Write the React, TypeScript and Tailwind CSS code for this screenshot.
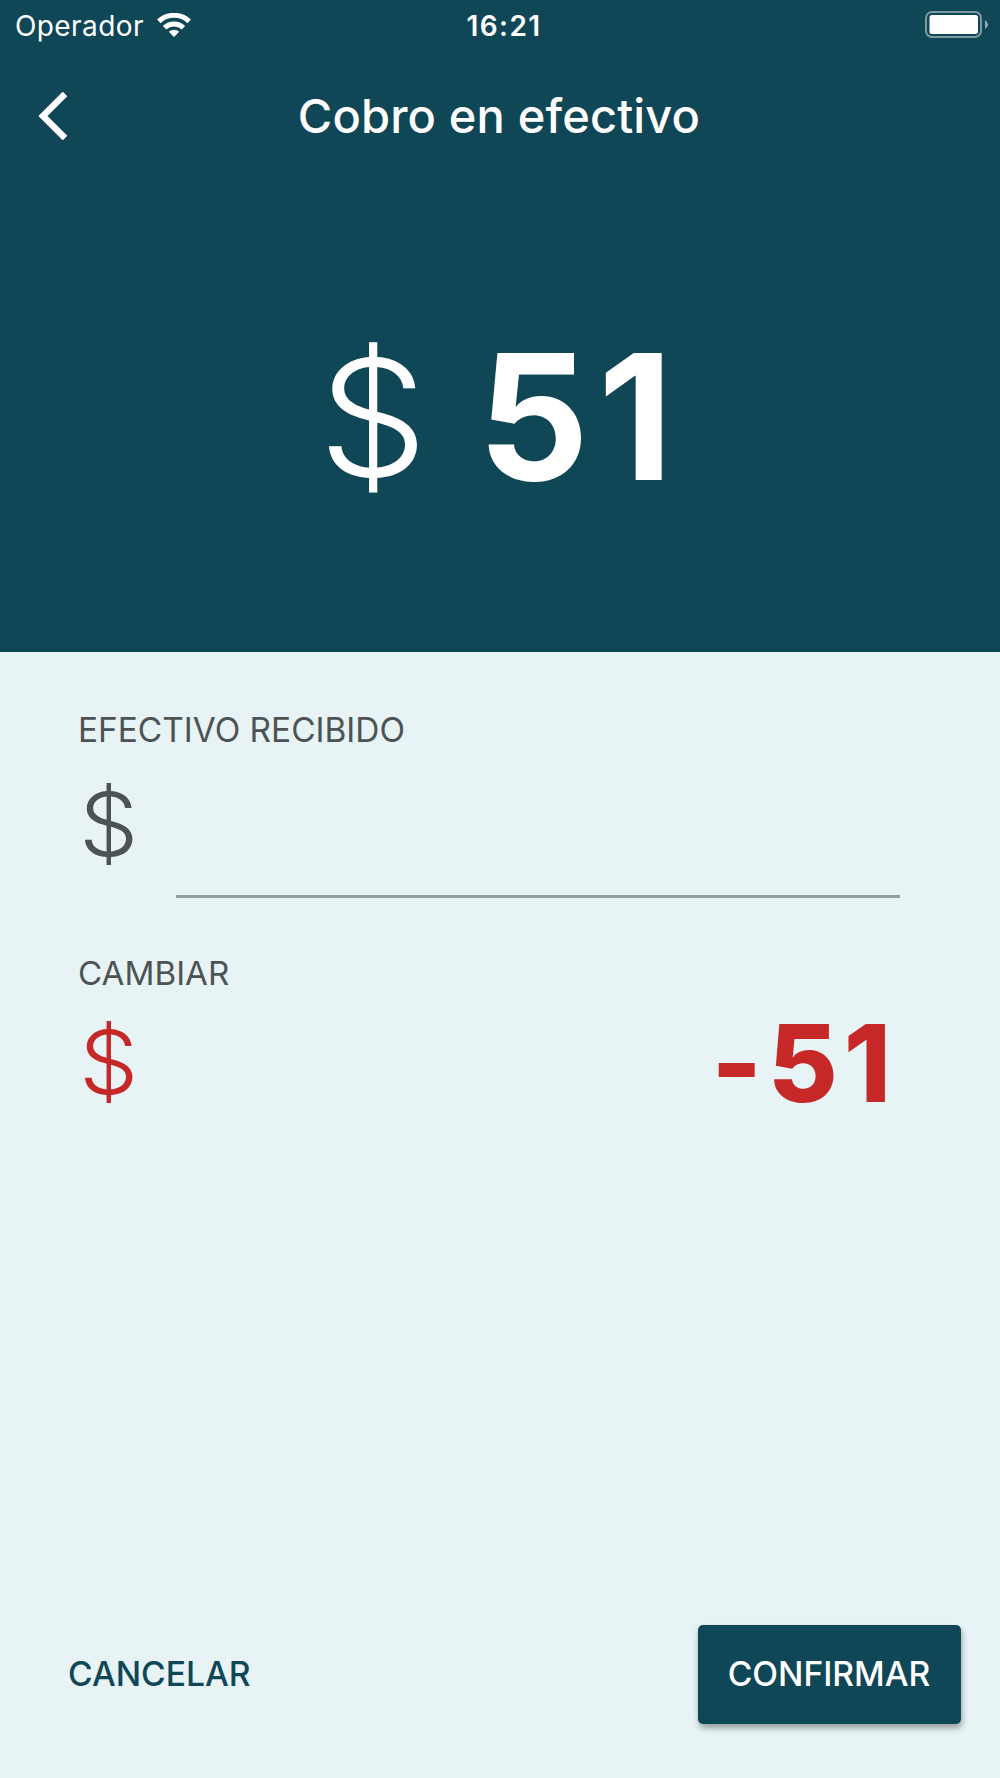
const StatusBar = () => (
  <div className="flex h-[50px] items-center justify-between pl-[15px] pr-[12px] text-[28px]">
    <div className="flex flex-1 items-center gap-[13px]">
      <span className="pt-px tracking-[0.4px]">Operador</span>
      <svg width="34" height="24" viewBox="0 0 34 24" fill="none" stroke="currentColor" strokeWidth="5" className="mb-px">
        <path d="M1.8 8.4a22 22 0 0 1 30.4 0" />
        <path d="M7.6 14.8a13.6 13.6 0 0 1 18.8 0" />
        <path d="M17 24l-5.2-5.2a7.6 7.6 0 0 1 10.4 0z" fill="currentColor" stroke="none" />
      </svg>
    </div>
    <span className="pl-[5px] pt-px font-semibold tracking-[1.4px]">16:21</span>
    <div className="flex flex-1 justify-end">
      <svg width="63" height="28" viewBox="0 0 63 28" fill="none" className="mb-px">
        <rect x="1" y="1" width="55" height="25" rx="6" stroke="#fff" strokeOpacity=".45" strokeWidth="2" />
        <rect x="4.5" y="4" width="48.5" height="19" rx="2.5" fill="#fff" />
        <path d="M60 9q6 4.5 0 9z" fill="#fff" fillOpacity=".55" />
      </svg>
    </div>
  </div>
);

const App = () => (
  <div className="flex h-[1778px] w-[1000px] flex-col bg-[#e7f3f5] font-['Inter','Liberation_Sans',sans-serif]">
    <header className="flex h-[652px] flex-col bg-[#104756] text-white">
      <StatusBar />
      <div className="grid h-[132px] grid-cols-[100px_1fr_100px] items-center">
        <button className="pl-[37px]">
          <svg width="32" height="48" viewBox="0 0 32 48" fill="none" stroke="currentColor" strokeWidth="6.5">
            <path d="M28 2L6 24l22 22" />
          </svg>
        </button>
        <h1 className="pr-[2px] pt-px text-center text-[47px] font-medium tracking-[0.15px]">Cobro en efectivo</h1>
      </div>
      <div className="flex flex-1 justify-center gap-[50px] pt-[130px] text-[174px] leading-[210px]">
        <span className="h-[210px] scale-y-[0.93] font-light">$</span>
        <span className="font-bold tracking-[9px]">51</span>
      </div>
    </header>
    <main className="flex flex-1 flex-col px-[78px] pt-[56px] text-[#4d5354]">
      <label className="text-[33.4px] leading-[44px]">EFECTIVO RECIBIDO</label>
      <div className="flex h-[146px] pr-[22px]">
        <span className="h-[144px] w-[98px] scale-y-[0.94] pl-px text-[94px] font-light leading-[144px]">$</span>
        <input className="flex-1 border-b-[3px] border-[#929d9f] bg-transparent outline-none" />
      </div>
      <div className="mt-[53px] text-[33.2px] leading-[44px]">CAMBIAR</div>
      <div className="flex justify-between pr-[25px] text-[107px] leading-[134px] text-[#c62828]">
        <span className="scale-y-[0.94] pl-px text-[94px] font-light">$</span>
        <span className="pt-px font-extrabold tracking-[6px] [font-feature-settings:'calt'_0]">-51</span>
      </div>
    </main>
    <footer className="flex items-center justify-between pb-[54px] pl-[68px] pr-[39px] text-[33.6px] font-medium">
      <button className="pb-px text-[#104756]">CANCELAR</button>
      <button className="h-[99px] w-[263px] rounded-[5px] bg-[#104756] pr-px text-white shadow-[1px_4px_6px_rgba(0,0,0,0.35)]">CONFIRMAR</button>
    </footer>
  </div>
);

export default App;
